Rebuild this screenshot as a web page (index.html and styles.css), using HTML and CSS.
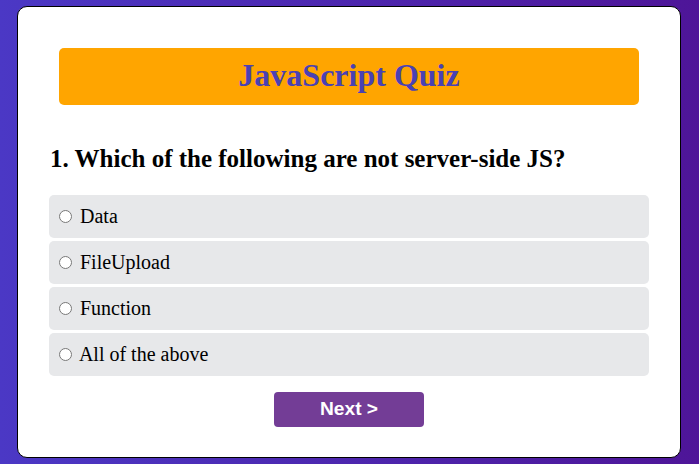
FILE: index.html
```html
<!DOCTYPE html>
<html lang="en">
<head>
<meta charset="utf-8">
<title>JavaScript Quiz</title>
<link rel="stylesheet" href="styles.css">
</head>
<body>
  <div class="card">
    <div class="header">
      <h1 class="title">JavaScript Quiz</h1>
    </div>
    <div class="quiz">
      <h2 class="question">1. Which of the following are not server-side JS?</h2>
      <ul class="options">
        <li class="option"><label><input type="radio" name="answer"> Data</label></li>
        <li class="option"><label><input type="radio" name="answer"> FileUpload</label></li>
        <li class="option"><label><input type="radio" name="answer"> Function</label></li>
        <li class="option"><label><input type="radio" name="answer"> All of the above</label></li>
      </ul>
      <div class="actions">
        <button class="next" type="button">Next &gt;</button>
      </div>
    </div>
  </div>
</body>
</html>
```
FILE: styles.css
```css
* {
  box-sizing: border-box;
}

html, body {
  height: 100%;
}

body {
  margin: 0;
  background: linear-gradient(to right, #4b38c5, #4e1598);
  font-family: "Liberation Serif", "Times New Roman", serif;
  color: #000;
  overflow: hidden;
}

.card {
  width: 664px;
  height: 452px;
  margin: 6px 0 0 17px;
  background: #fff;
  border: 1px solid #000;
  border-radius: 10px;
  padding-top: 41px;
}

.header {
  width: 580px;
  height: 57px;
  margin: 0 auto;
  background: #ffa500;
  border-radius: 5px;
}

.title {
  margin: 0;
  font-size: 32px;
  font-weight: bold;
  line-height: 55px;
  text-align: center;
  color: #4a41b3;
}

.quiz {
  width: 600px;
  margin: 40px auto 0;
}

.question {
  margin: 0 0 22px 1px;
  font-size: 25px;
  font-weight: bold;
  line-height: 28px;
}

.options {
  list-style: none;
  margin: 0;
  padding: 0;
  display: flex;
  flex-direction: column;
  gap: 3px;
}

.option {
  height: 43px;
  background: #e7e8ea;
  border-radius: 5px;
  padding: 0 5px;
  display: flex;
  align-items: center;
  font-size: 20px;
}

.option input {
  margin: 0 3px 0 5px;
  width: 13px;
  height: 13px;
  vertical-align: middle;
  position: relative;
  top: -2px;
}

.actions {
  display: flex;
  justify-content: center;
  margin-top: 16px;
}

.next {
  width: 150px;
  height: 35px;
  border: none;
  border-radius: 4px;
  background: #733d96;
  color: #fff;
  font-family: "Liberation Sans", Arial, sans-serif;
  font-size: 19.2px;
  font-weight: bold;
  padding: 0 0 2px;
  cursor: pointer;
}
```
